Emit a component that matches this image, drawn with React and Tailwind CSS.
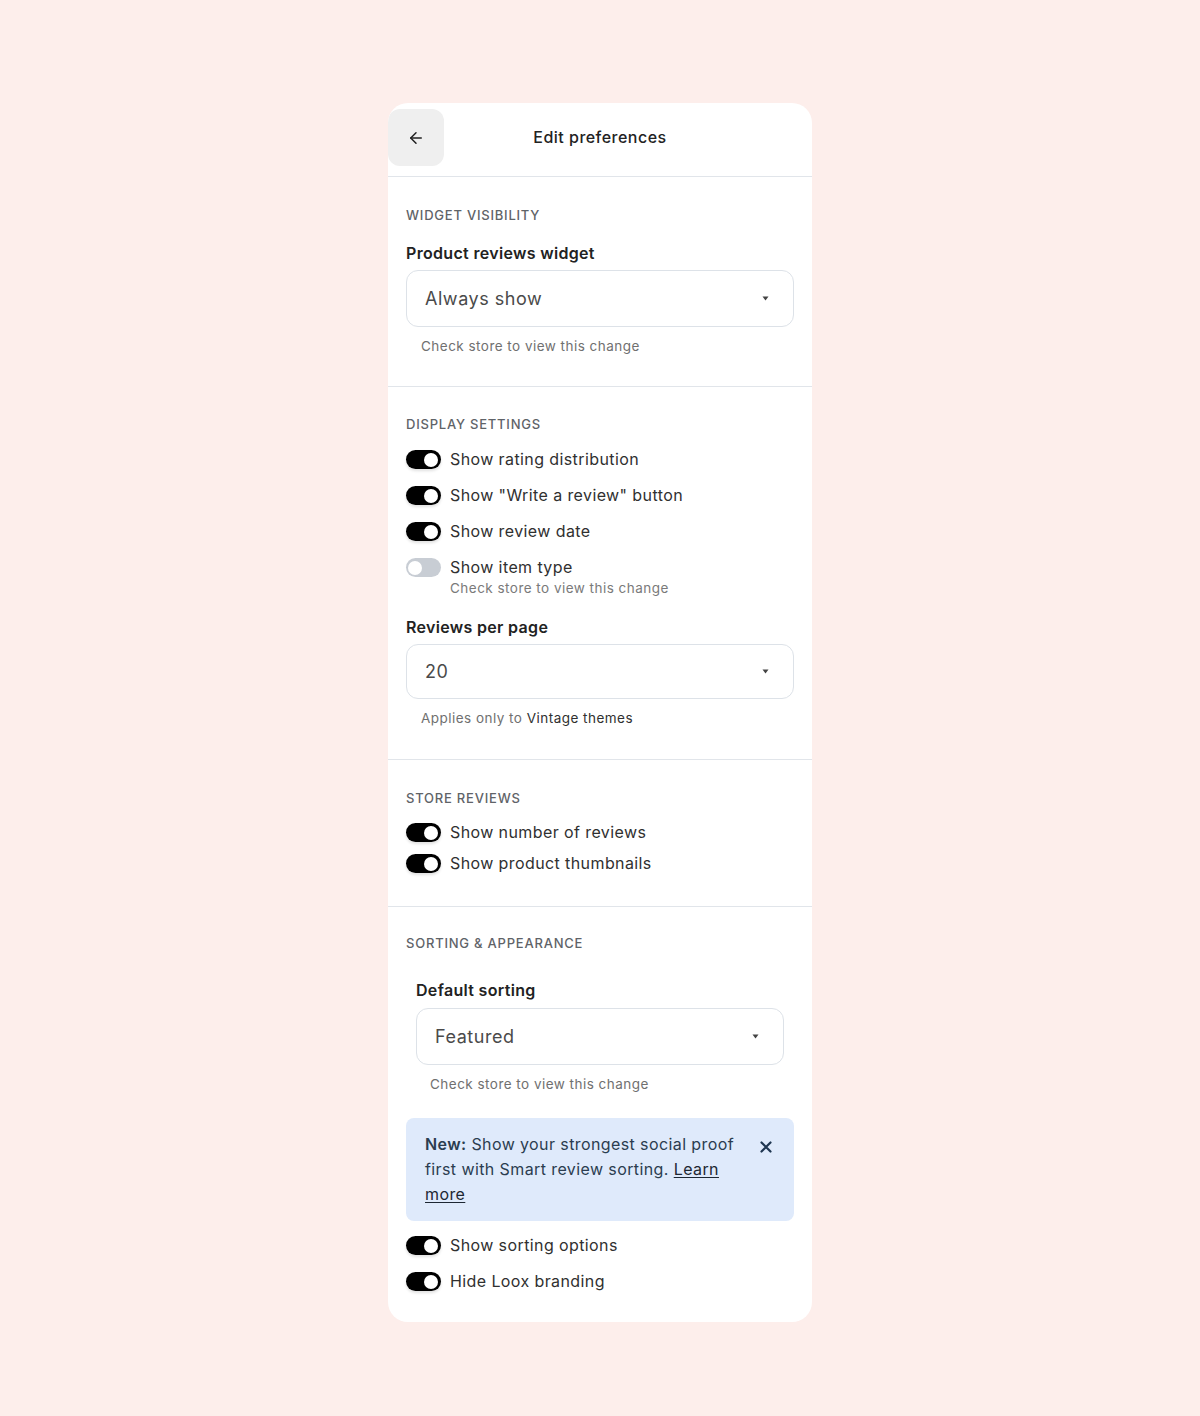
import React, { useState } from "react";

const Toggle = ({ on }) => (
  <span
    className={`relative flex h-[19px] w-[35px] flex-shrink-0 items-center rounded-full ${
      on ? "bg-black shadow-[0_2px_3px_rgba(0,0,0,0.12)]" : "bg-[#c8cdd4]"
    }`}
  >
    <span
      className={`absolute h-[14px] w-[14px] rounded-full bg-white ${
        on ? "left-[18px]" : "left-[2px]"
      }`}
    />
  </span>
);

const ToggleRow = ({ on = true, label, hint }) => (
  <div className="flex items-start gap-[9px]">
    <div className="flex pt-[1px]">
      <Toggle on={on} />
    </div>
    <div className="flex flex-col">
      <span className="text-[16px] leading-[21px] tracking-[0.025em] text-[#303030]">{label}</span>
      {hint && (
        <span className="mt-[2px] text-[13.5px] leading-[17px] tracking-[0.035em] text-[#7a7a7a]">
          {hint}
        </span>
      )}
    </div>
  </div>
);

const SectionTitle = ({ children }) => (
  <div className="text-[13px] font-medium uppercase leading-4 tracking-[0.06em] text-[#5f6368]">
    {children}
  </div>
);

const FieldLabel = ({ children, className = "" }) => (
  <div className={`text-[16px] font-semibold leading-5 tracking-[0.02em] text-[#222] ${className}`}>
    {children}
  </div>
);

const Hint = ({ children, className = "" }) => (
  <div className={`text-[13.5px] leading-[18px] tracking-[0.035em] text-[#707070] ${className}`}>
    {children}
  </div>
);

const Select = ({ value, className = "" }) => (
  <div
    className={`flex items-center justify-between rounded-[12px] border border-[#dde2e8] bg-white pl-[18px] pr-[24px] ${className}`}
  >
    <span className="text-[18px] tracking-[0.03em] text-[#4a4a4a]">{value}</span>
    <svg width="7" height="5" viewBox="0 0 7 5">
      <path d="M0.5 0.5h6L3.5 4.5z" fill="#444" />
    </svg>
  </div>
);

export default function App() {
  const [bannerOpen, setBannerOpen] = useState(true);

  return (
    <div
      className="min-h-[1416px] bg-[#fdeeeb] pt-[103px]"
      style={{ fontFamily: "Inter, 'Noto Sans', sans-serif" }}
    >
      <div className="mx-auto w-[424px] overflow-hidden rounded-[20px] bg-white pb-[30px]">
        {/* Header */}
        <div className="relative flex h-[74px] items-start border-b border-[#e1e5ea] pt-[6px]">
          <button className="flex h-[57px] w-[56px] items-center justify-center rounded-[12px] bg-[#efefef] text-[#222]">
            <svg width="18" height="18" viewBox="0 0 24 24" fill="none" stroke="currentColor" strokeWidth="2" strokeLinecap="round" strokeLinejoin="round">
              <path d="M19 12H5" />
              <path d="M12 19l-7-7 7-7" />
            </svg>
          </button>
          <div className="absolute left-0 right-0 top-[24px] text-center text-[16px] font-medium leading-5 tracking-[0.03em] text-[#222]">
            Edit preferences
          </div>
        </div>

        {/* Widget visibility */}
        <div className="border-b border-[#e1e5ea] px-[18px] pb-[31px] pt-[30px]">
          <SectionTitle>Widget visibility</SectionTitle>
          <FieldLabel className="mt-[20px]">Product reviews widget</FieldLabel>
          <Select value="Always show" className="mt-[7px] h-[57px]" />
          <Hint className="mt-[10px] pl-[15px]">Check store to view this change</Hint>
        </div>

        {/* Display settings */}
        <div className="border-b border-[#e1e5ea] px-[18px] pb-[32px] pt-[29px]">
          <SectionTitle>Display settings</SectionTitle>
          <div className="mt-[17px] flex flex-col gap-[15px]">
            <ToggleRow label="Show rating distribution" />
            <ToggleRow label={'Show "Write a review" button'} />
            <ToggleRow label="Show review date" />
            <ToggleRow on={false} label="Show item type" hint="Check store to view this change" />
          </div>
          <FieldLabel className="mt-[20px]">Reviews per page</FieldLabel>
          <Select value="20" className="mt-[7px] h-[55px]" />
          <Hint className="mt-[10px] pl-[15px]">
            Applies only to <span className="text-[#303030]">Vintage themes</span>
          </Hint>
        </div>

        {/* Store reviews */}
        <div className="border-b border-[#e1e5ea] px-[18px] pb-[32px] pt-[30px]">
          <SectionTitle>Store reviews</SectionTitle>
          <div className="mt-[16px] flex flex-col gap-[10px]">
            <ToggleRow label="Show number of reviews" />
            <ToggleRow label="Show product thumbnails" />
          </div>
        </div>

        {/* Sorting & appearance */}
        <div className="px-[18px] pt-[28px]">
          <SectionTitle>Sorting &amp; appearance</SectionTitle>
          <div className="px-[10px]">
            <FieldLabel className="mt-[29px]">Default sorting</FieldLabel>
            <Select value="Featured" className="mt-[8px] h-[57px]" />
            <Hint className="mt-[10px] pl-[14px]">Check store to view this change</Hint>
          </div>

          {bannerOpen && (
            <div className="mt-[25px] flex items-start justify-between rounded-[8px] bg-[#dfeafb] py-[14px] pl-[19px] pr-[22px]">
              <p className="w-[320px] text-[16px] leading-[25px] tracking-[0.025em] text-[#2b3d50]">
                <span className="font-semibold">New:</span> Show your strongest social proof first with Smart review sorting.{" "}
                <a href="#" className="text-[#1d2733] underline underline-offset-2">
                  Learn more
                </a>
              </p>
              <button onClick={() => setBannerOpen(false)} className="mt-[9px] text-[#1f3651]">
                <svg width="12" height="12" viewBox="0 0 12 12" fill="none" stroke="currentColor" strokeWidth="2.2" strokeLinecap="round">
                  <path d="M1.5 1.5l9 9M10.5 1.5l-9 9" />
                </svg>
              </button>
            </div>
          )}

          <div className="mt-[14px] flex flex-col gap-[15px]">
            <ToggleRow label="Show sorting options" />
            <ToggleRow label="Hide Loox branding" />
          </div>
        </div>
      </div>
    </div>
  );
}
